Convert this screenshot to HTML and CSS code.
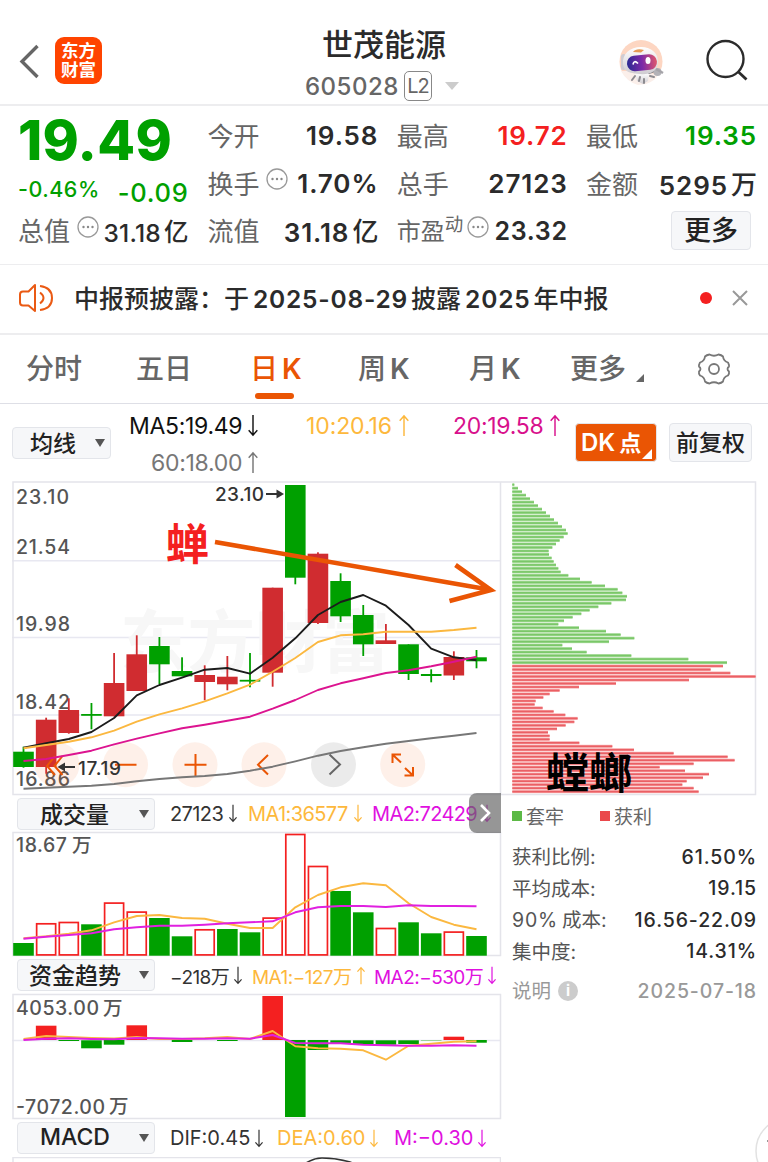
FILE: index.html
```html
<!DOCTYPE html>
<html lang="zh-CN">
<head>
    <meta charset="UTF-8">
    <meta name="viewport" content="width=device-width, initial-scale=1.0">
    <title>世茂能源 605028</title>
    <link rel="stylesheet" href="styles.css">
</head>
<body>
    <header class="header">
        <div class="header-left">
            <svg class="back" width="22" height="36" viewBox="0 0 22 36"><path d="M19.500 2 4 17.500 19.500 33" fill="none" stroke="#666" stroke-width="3.400"/></svg>
            <div class="logo"><span>东方</span><span>财富</span></div>
        </div>
        <div class="stock">
            <h1>世茂能源</h1>
            <div class="code"><span class="code-num">605028</span><span class="level">L2</span><i class="code-arrow"></i></div>
        </div>
        <div class="header-right">
            <svg class="robot" width="46" height="46" viewBox="0 0 46 46">
                <defs>
                    <linearGradient id="visor"><stop offset="0" stop-color="#2b2a92"/><stop offset=".5" stop-color="#7c2aa8"/><stop offset="1" stop-color="#e0566c"/></linearGradient>
                    <linearGradient id="shell" x2="0" y2="1"><stop offset="0" stop-color="#fff"/><stop offset="1" stop-color="#cfccd1"/></linearGradient>
                </defs>
                <circle cx="23" cy="22.500" r="21.500" fill="#fdd6c2"/>
                <path d="M3 32q6 11 17 14l8-1q9-3 12-9l-14-4z" fill="#fbefea"/>
                <path d="M17 34h14l-1 8-5 3-6-3z" fill="url(#shell)"/>
                <path d="M17 37l-3 4M21 42l1-4M26 44v-4M31 34l6-2M32 37l4 1" stroke="#8c8b90" stroke-width="2" stroke-linecap="round"/>
                <circle cx="39.500" cy="33" r="4" fill="#b3b2b7"/>
                <path d="M38 30l7 4" stroke="#a5a4a9" stroke-width="2.500"/>
                <rect x="3" y="15" width="5" height="16" rx="2.500" fill="#cfccd2"/>
                <path d="M5 25C4 15 12 8 23 8s18 7 17 16-9 12-18 11S6 34 5 25z" fill="url(#shell)"/>
                <path d="M15 13q3-4 11-2l-3 2.500z" fill="#e59a55"/>
                <rect x="9" y="16" width="30" height="15.500" rx="7.500" fill="url(#visor)" transform="rotate(-6 24 24)"/>
                <path d="M15 25.500q1-5 5-1" fill="none" stroke="#fff" stroke-width="1.700"/>
                <ellipse cx="30" cy="21.500" rx="2.500" ry="3.500" fill="#fff"/>
            </svg>
            <svg class="search" width="44" height="44" viewBox="0 0 44 44"><circle cx="20.500" cy="20" r="18" fill="none" stroke="#2b2b2b" stroke-width="2.400"/><path d="M33.500 33l8 7.500" stroke="#2b2b2b" stroke-width="2.800"/></svg>
        </div>
    </header>

    <section class="quote">
        <div class="price-box">
            <div class="price">19.49</div>
            <div class="change"><span class="pct">-0.46%</span><span class="diff">-0.09</span></div>
            <div class="cell"><span class="label">总值</span><svg class="dots" viewBox="0 0 22 22"><use href="#dots"/></svg><b class="small">31.18<em>亿</em></b></div>
        </div>
        <div class="quote-grid">
            <div class="cell"><span class="label">今开</span><b>19.58</b></div>
            <div class="cell"><span class="label">最高</span><b class="red">19.72</b></div>
            <div class="cell"><span class="label">最低</span><b class="green">19.35</b></div>
            <div class="cell"><span class="label">换手</span><svg class="dots" viewBox="0 0 22 22"><use href="#dots"/></svg><b>1.70%</b></div>
            <div class="cell"><span class="label">总手</span><b>27123</b></div>
            <div class="cell"><span class="label">金额</span><b>5295<em>万</em></b></div>
            <div class="cell"><span class="label">流值</span><b>31.18<em>亿</em></b></div>
            <div class="cell"><span class="label pe">市盈<sup>动</sup></span><svg class="dots" viewBox="0 0 22 22"><use href="#dots"/></svg><b class="pe-value">23.32</b></div>
            <div class="cell"><button class="btn more-btn">更多</button></div>
        </div>
        <svg class="defs" width="0" height="0"><symbol id="dots" viewBox="0 0 22 22"><circle cx="11" cy="11" r="10" fill="none" stroke="#999" stroke-width="1.300"/><circle cx="6.500" cy="11" r="1.200" fill="#888"/><circle cx="11" cy="11" r="1.200" fill="#888"/><circle cx="15.500" cy="11" r="1.200" fill="#888"/></symbol></svg>
    </section>

    <section class="notice">
        <svg width="36" height="30" viewBox="0 0 36 30" fill="none" stroke="#ea5a14" stroke-width="2" stroke-linejoin="round"><path d="M16 2v26l-6.500-5.500H4q-3 0-3-3v-8q0-3 3-3h5.500z"/><path d="M21 9.500q7 5.500 0 11M21 3q12 1.500 12 12T21 27"/></svg>
        <p>中报预披露：<span class="yu">于</span><span class="num">2025-08-29</span>披露<span class="num">2025</span>年中报</p>
        <i class="red-dot"></i>
        <svg width="18" height="18" viewBox="0 0 18 18"><path d="M2 2l14 14M16 2 2 16" stroke="#999" stroke-width="2"/></svg>
    </section>

    <nav class="tabs">
        <a>分时</a>
        <a>五日</a>
        <a class="active">日<span>K</span></a>
        <a>周<span>K</span></a>
        <a>月<span>K</span></a>
        <a class="tab-more">更多<i></i></a>
        <svg width="34" height="34" viewBox="0 0 34 34" fill="none" stroke="#777" stroke-width="1.800" stroke-linejoin="round"><path d="M12.500 2.500Q17 5 21.500 2.500q3 .5 4.500 2 .5 4.500 5 6 1.500 3 1 4-3 2.500 0 5 .5 2-1 4-4.500 1.500-5 6-1.500 1.500-4.500 2-4.500-2.500-9 0-3-.5-4.500-2-.5-4.500-5-6-1.500-2-1-4 3-2.500 0-5-.5-1 1-4 4.500-1.500 5-6 1.500-1.500 4.500-2z"/><circle cx="17" cy="17" r="5"/></svg>
    </nav>

    <section class="ma-bar">
        <button class="btn select ma-select">均线<i></i></button>
        <div class="ma-values">
            <span class="ma5">MA5:19.49<svg class="arr"><use href="#down"/></svg></span>
            <span class="ma10">10:20.16<svg class="arr"><use href="#up"/></svg></span>
            <span class="ma20">20:19.58<svg class="arr"><use href="#up"/></svg></span>
            <span class="ma60">60:18.00<svg class="arr"><use href="#up"/></svg></span>
        </div>
        <button class="btn dk">DK<span>点</span></button>
        <button class="btn fq">前复权</button>
        <svg class="defs" width="0" height="0">
            <symbol id="down" viewBox="0 0 12 24"><path d="M6 1v21M1.500 17 6 22l4.500-5" fill="none" stroke="currentColor" stroke-width="1.500"/></symbol>
            <symbol id="up" viewBox="0 0 12 24"><path d="M6 23V2M1.500 7 6 2l4.500 5" fill="none" stroke="currentColor" stroke-width="1.500"/></symbol>
        </svg>
    </section>

    <main class="main">
        <div class="charts">
            <svg class="chart" width="489" height="314" viewBox="12 481 489 314">
                <path class="grid" d="M12 560.700h489M12 637.500h489M12 715h489M410 644.300h91"/>
                <path class="frame" d="M13 482h487.500v312.500H13z"/>
                <text class="watermark" x="120" y="667" textLength="270">东方财富</text>
                <g class="axis">
                    <text x="16" y="503.500" textLength="53">23.10</text>
                    <text x="16" y="554" textLength="54">21.54</text>
                    <text x="16" y="631" textLength="54">19.98</text>
                    <text x="16" y="709" textLength="54">18.42</text>
                    <text x="16" y="786" textLength="54">16.86</text>
                </g>
                <g id="candles"></g>
                <g class="tools">
                    <circle cx="57" cy="764.700" r="22.500"/><circle cx="125.500" cy="764.700" r="22.500"/><circle cx="195" cy="764.700" r="22.500"/><circle cx="264" cy="764.700" r="22.500"/><circle class="off" cx="333.500" cy="764.700" r="22.500"/><circle cx="402.700" cy="764.700" r="22.500"/>
                    <path d="M55 756l-8 10 8 9M62.500 756l-8 10 8 9M115 764.700h21.500M184.500 764.700h22M195.500 754v22M268 755l-10 9.700 10 9.800"/>
                    <path d="M392.500 763v-8.500h8.500M392.500 754.500l8.500 8M405 768l8 7.500M413 767v8.500h-8.500"/>
                    <path class="off-arrow" d="M329.500 754.500l10.500 10-10.500 10"/>
                </g>
                <g id="ma-lines"></g>
                <text class="mark" x="215" y="501" textLength="49">23.10</text>
                <path class="mark-arrow" d="M266 494h12"/><path d="M276.500 489.500 284 494l-7.500 4.500z" fill="#333"/>
                <text class="mark" x="78" y="774.500" textLength="43">17.19</text>
                <path class="mark-arrow" d="M75 767H63"/><path d="M65 762.500 57.500 767l7.500 4.500z" fill="#333"/>
                <text class="cicada" x="166" y="559.500">蝉</text>
            </svg>

            <div class="indicator first">
                <button class="btn select">成交量<i></i></button>
                <span class="v0">27123<svg class="arr"><use href="#down"/></svg></span>
                <span class="v1">MA1:36577<svg class="arr"><use href="#down"/></svg></span>
                <span class="v2">MA2:72429<svg class="arr"><use href="#down"/></svg></span>
                <div class="handle"><svg width="14" height="22" viewBox="0 0 14 22"><path d="M3 3l8 8-8 8" fill="none" stroke="#fff" stroke-width="2.600"/></svg></div>
            </div>
            <svg class="chart" width="489" height="124" viewBox="12 832 489 124">
                <path class="frame" d="M13 832.500h487.500v123H13z"/>
                <text class="axis" x="16" y="852" textLength="51">18.67</text><text class="axis" x="72" y="852">万</text>
                <g id="volume"></g>
            </svg>

            <div class="indicator second">
                <button class="btn select">资金趋势<i></i></button>
                <span class="v0">−218万<svg class="arr"><use href="#down"/></svg></span>
                <span class="v1">MA1:−127万<svg class="arr"><use href="#up"/></svg></span>
                <span class="v2">MA2:−530万<svg class="arr"><use href="#down"/></svg></span>
            </div>
            <svg class="chart" width="489" height="125" viewBox="12 994 489 125">
                <path class="grid" d="M12 1040.500h489"/>
                <path class="frame" d="M13 994.500h487.500v124H13z"/>
                <text class="axis" x="16" y="1015" textLength="83">4053.00</text><text class="axis" x="103" y="1014.500">万</text>
                <text class="axis" x="16" y="1113.500" textLength="89">-7072.00</text><text class="axis" x="109" y="1113">万</text>
                <g id="fund"></g>
            </svg>

            <div class="indicator third">
                <button class="btn select">MACD<i></i></button>
                <span class="v0">DIF:0.45<svg class="arr"><use href="#down"/></svg></span>
                <span class="v1">DEA:0.60<svg class="arr"><use href="#down"/></svg></span>
                <span class="v2">M:−0.30<svg class="arr"><use href="#down"/></svg></span>
            </div>
            <svg class="chart cut" width="489" height="5" viewBox="12 1157 489 5">
                <path class="frame" d="M13 1170v-12.500h487.500V1170"/>
                <path d="M306 1163q8-5 16-5 14 0 28 4l5 2" fill="none" stroke="#333" stroke-width="1.600"/>
            </svg>
        </div>

        <aside class="chips">
            <svg class="chart" width="256" height="314" viewBox="501 481 256 314">
                <path class="frame" d="M501 482h254.500v312.500H501"/>
                <g id="chips"></g>
                <text class="mantis" x="546" y="789" textLength="86">螳螂</text>
            </svg>
            <div class="legend"><span><i class="bg-green"></i>套牢</span><span><i class="bg-red"></i>获利</span></div>
            <dl>
                <div><dt>获利比例:</dt><dd>61.50%</dd></div>
                <div><dt>平均成本:</dt><dd>19.15</dd></div>
                <div><dt><span>90%</span>成本:</dt><dd>16.56-22.09</dd></div>
                <div><dt>集中度:</dt><dd>14.31%</dd></div>
                <div class="explain"><dt>说明<i>i</i></dt><dd>2025-07-18</dd></div>
            </dl>
        </aside>

        <svg class="pointer" width="284" height="48" viewBox="213 560 284 48"><path d="M215 542l275 47.800M455.500 565l35.500 25-41.500 11"/></svg>
    </main>
    <svg class="float-btn" width="13" height="46" viewBox="755 1116 13 46"><circle cx="789" cy="1151" r="33" fill="#fff" stroke="#e2e2e2" stroke-width="1.500"/><path d="M767 1141h1" stroke="#999" stroke-width="2"/></svg>

    <script src="script.js"></script>
</body>
</html>
```
FILE: styles.css
```css
* {
    box-sizing: border-box;
}

body {
    margin: 0;
    width: 768px;
    height: 1162px;
    overflow: hidden;
    position: relative;
    background: #fff;
    color: #2b2b2b;
    font-family: Inter, "Noto Sans CJK SC", sans-serif;
}

i, em {
    font-style: normal;
}

.defs {
    position: absolute;
}

.green {
    color: #00a000;
}

.red {
    color: #f42020;
}

/* header */
.header {
    height: 106px;
    display: grid;
    grid-template-columns: 250px 1fr 250px;
    border-bottom: 2px solid #ededef;
}

.header-left {
    display: flex;
    align-items: flex-start;
    padding: 37px 0 0 18px;
    gap: 15px;
}

.back {
    margin-top: 7px;
}

.logo {
    width: 47px;
    height: 47px;
    border-radius: 9px;
    background: #ff4400;
    color: #fff;
    font-size: 17.5px;
    font-weight: 700;
    line-height: 19px;
    padding-top: 4px;
    text-align: center;
}

.logo span {
    display: block;
}

.stock h1 {
    margin: 24px 0 0;
    font-size: 31px;
    line-height: 42px;
    font-weight: 500;
    text-align: center;
}

.code {
    display: flex;
    align-items: center;
    height: 40px;
    padding-left: 55px;
    color: #666;
}

.code-num {
    font-size: 24px;
    font-weight: 500;
    letter-spacing: 0.5px;
    width: 99px;
}

.level {
    width: 28px;
    height: 30px;
    border: 1.5px solid #888;
    border-radius: 5px;
    font-size: 20px;
    line-height: 28px;
    text-align: center;
    letter-spacing: -1px;
}

.code-arrow {
    margin-left: 13px;
    border: 7px solid transparent;
    border-top: 8px solid #ccc;
    border-bottom: 0;
}

.header-right {
    display: flex;
    align-items: flex-start;
    padding: 39px 0 0 100px;
    gap: 41px;
}

/* quote */
.quote {
    height: 159px;
    display: flex;
    padding: 6px 12px 0 18px;
    border-bottom: 1.5px solid #ededef;
}

.price-box {
    width: 170px;
    margin-right: 20px;
    color: #00a000;
}

.price {
    font-size: 55px;
    font-weight: 800;
    line-height: 57px;
    height: 58px;
    letter-spacing: 0.3px;
}

.change {
    display: flex;
    justify-content: space-between;
    height: 37px;
    line-height: 38px;
    font-weight: 500;
}

.pct {
    font-size: 21.5px;
    letter-spacing: 0.5px;
}

.diff {
    font-size: 25.5px;
    letter-spacing: 0.7px;
    padding-top: 4px;
    margin-right: -1px;
}

.quote-grid {
    display: grid;
    grid-template-columns: 170px 170px 170px;
    grid-template-rows: 47.5px 47.5px 47.5px;
    column-gap: 19.3px;
}

.cell {
    display: flex;
    align-items: center;
    height: 47.5px;
    color: #2b2b2b;
}

.label {
    font-size: 26px;
    color: #666;
    padding-bottom: 2px;
}

.cell b {
    margin-left: auto;
    margin-right: -1px;
    font-size: 26px;
    font-weight: 600;
    letter-spacing: 0.9px;
}

.cell b em {
    font-weight: 500;
    margin-left: 3px;
    letter-spacing: 0;
    position: relative;
    top: -1px;
}

.cell b.small {
    font-size: 24.5px;
    padding-top: 2px;
    font-weight: 500;
    letter-spacing: 0.2px;
}

.dots {
    width: 22px;
    height: 22px;
    flex: none;
    margin: -8px 0 0 7px;
}

.pe {
    font-size: 24px;
    width: 70px;
    white-space: nowrap;
}

.pe sup {
    font-size: 18.5px;
    line-height: 0;
    vertical-align: 9px;
}

.cell .pe + .dots {
    margin-left: 0;
}

.cell b.pe-value {
    font-size: 25px;
    letter-spacing: 0.7px;
}

.btn {
    border: 1.5px solid #e3e5ea;
    border-radius: 4px;
    background: #f6f7f9;
    color: #222;
    font-family: inherit;
    font-weight: 500;
    padding: 0;
}

.more-btn {
    width: 80px;
    height: 39px;
    margin: 0 5px 0 auto;
    font-size: 27px;
    line-height: 34px;
}

/* notice */
.notice {
    height: 70px;
    display: flex;
    align-items: center;
    padding: 0 19px 2px 19px;
    border-bottom: 2px solid #ededef;
}

.notice p {
    margin: -2px auto 0 19px;
    font-size: 25px;
    font-weight: 500;
    white-space: nowrap;
}

.notice .num {
    font-weight: 600;
    margin: 0 3px 0 4px;
    font-size: 24.5px;
    letter-spacing: 0.8px;
}

.red-dot {
    width: 12px;
    height: 12px;
    border-radius: 50%;
    background: #f42020;
    margin-right: 19px;
}

/* tabs */
.tabs {
    height: 69px;
    display: flex;
    align-items: center;
    padding-left: 26px;
    border-bottom: 1.5px solid #dedfe6;
    font-size: 28px;
    font-weight: 500;
    color: #666;
}

.tabs a {
    position: relative;
    width: 110px;
    white-space: nowrap;
    line-height: 69px;
}

.tabs a:nth-child(3) {
    padding-left: 4px;
}

.tabs a:nth-child(4) {
    padding-left: 2px;
}

.tabs a:nth-child(5) {
    padding-left: 3px;
    width: 104px;
}

.tabs a span {
    margin-left: 4px;
    font-weight: 600;
}

.tabs .active {
    color: #ea5504;
}

.tabs .active::after {
    content: "";
    position: absolute;
    left: 9px;
    bottom: 5px;
    width: 39px;
    height: 6px;
    border-radius: 3px;
    background: #ea5504;
}

.tabs .tab-more {
    width: 127px;
}

.tab-more i {
    display: inline-block;
    margin-left: 10px;
    margin-bottom: -3px;
    border: 4px solid #666;
    border-left-color: transparent;
    border-top-color: transparent;
}

/* moving averages */
.ma-bar {
    height: 77px;
    display: flex;
    padding: 0 15px 0 12px;
}

.select {
    width: 138px;
    height: 32px;
    flex: none;
    display: flex;
    align-items: center;
    justify-content: space-between;
    padding: 0 5px 2px 0;
    font-size: 23px;
}

.select i {
    border: 5px solid transparent;
    border-top: 8px solid #555;
    border-bottom: 0;
    margin-top: 2px;
}

.ma-bar .ma-select {
    width: 99px;
    margin-top: 23px;
    padding-left: 17px;
}

.arr {
    width: 12px;
    height: 23px;
    margin-left: 6px;
    flex: none;
}

.ma-values {
    width: 464px;
    display: grid;
    grid-template-columns: 195px 147px 1fr;
    grid-template-rows: 37px 37px;
    padding: 3px 0 0 18px;
    font-size: 23px;
    font-weight: 400;
}

.ma-values span {
    display: flex;
    align-items: center;
    white-space: nowrap;
    letter-spacing: -0.1px;
}

.ma-values .ma5 {
    color: #111;
    letter-spacing: -0.3px;
}

.ma5 .arr, .ma60 .arr {
    margin-left: 5px;
}

.ma-values .ma10 {
    color: #fdb83c;
    margin-left: -18px;
}

.ma-values .ma20 {
    color: #d8108c;
    margin-left: -18px;
    letter-spacing: -0.3px;
}

.ma-values .ma60 {
    color: #777;
    padding-left: 22px;
    letter-spacing: -0.3px;
}

.btn.dk {
    width: 82px;
    height: 39px;
    margin: 19px 12px 0 0;
    background: #ea5504;
    color: #fff;
    font-size: 24px;
    font-weight: 600;
    position: relative;
    text-align: left;
    padding-left: 5px;
    line-height: 34px;
}

.dk span {
    margin-left: 4px;
    font-size: 22px;
}

.dk::after {
    content: "";
    position: absolute;
    right: 4px;
    bottom: 2px;
    border: 5.5px solid #fff;
    border-left-color: transparent;
    border-top-color: transparent;
}

.fq {
    width: 83px;
    height: 39px;
    margin-top: 19px;
    font-size: 23px;
    line-height: 34px;
}

.ma-bar .dk, .ma-bar .fq {
    flex: none;
}

/* charts */
.main {
    display: flex;
    position: relative;
    padding-left: 12px;
}

.charts {
    width: 489px;
}

.chart {
    display: block;
    overflow: visible;
}

.chart.cut {
    overflow: hidden;
}

.frame {
    fill: none;
    stroke: #e4e4ea;
    stroke-width: 1.5;
}

.grid {
    fill: none;
    stroke: #e8e8f1;
    stroke-width: 1.5;
}

.watermark {
    font-size: 68px;
    font-weight: 700;
    fill: #f7f7f7;
}

.axis {
    font-size: 19.5px;
    font-weight: 500;
    fill: #555;
}

.mark {
    font-size: 19px;
    font-weight: 500;
    fill: #333;
}

.mark-arrow {
    stroke: #333;
    stroke-width: 2;
}

.cicada {
    font-size: 43px;
    font-weight: 700;
    fill: #f42020;
}

.mantis {
    font-size: 43px;
    font-weight: 700;
    fill: #000;
}

.tools circle {
    fill: #fa6a28;
    fill-opacity: 0.1;
}

.tools circle.off {
    fill: #000;
    fill-opacity: 0.08;
}

.tools path {
    fill: none;
    stroke: #ea5504;
    stroke-width: 2;
}

.tools path.off-arrow {
    stroke: #666;
}

.pointer {
    position: absolute;
    left: 213px;
    top: 79px;
    overflow: visible;
    fill: none;
    stroke: #ea5504;
    stroke-width: 4.6;
}

.indicator {
    position: relative;
    height: 37px;
    display: flex;
    align-items: center;
    padding-left: 5px;
    font-size: 20px;
    white-space: nowrap;
}

.indicator .select {
    margin-right: 15px;
    padding-left: 22px;
}

.indicator .arr {
    width: 10px;
    height: 19px;
    margin-left: 4px;
}

.indicator span {
    display: flex;
    align-items: center;
    flex: none;
}

.v0 {
    width: 78px;
    color: #333;
}

.v1 {
    width: 124px;
    color: #fdb83c;
}

.v2 {
    color: #e010e0;
}

.first span {
    letter-spacing: -0.6px;
}

.first .arr {
    margin-left: 5px;
}

.second, .third {
    height: 38px;
}

.second .select {
    padding-left: 11px;
}

.second span {
    font-size: 19px;
    letter-spacing: -0.55px;
}

.second .v0 {
    width: 82px;
}

.second .v1 {
    width: 122px;
}

.third .v0 {
    width: 107px;
}

.third .v1 {
    width: 117px;
}

.handle {
    position: absolute;
    right: 0;
    top: -2px;
    width: 32px;
    height: 40px;
    display: flex;
    align-items: center;
    justify-content: center;
    border-radius: 8px 0 0 8px;
    background: rgba(100, 100, 100, 0.68);
}

/* chip distribution */
.legend {
    display: flex;
    height: 42px;
    align-items: center;
    padding: 0 0 2px 11px;
    font-size: 19px;
    color: #666;
}

.legend span {
    display: flex;
    align-items: center;
    width: 88px;
}

.legend i {
    width: 10px;
    height: 10px;
    margin: 1px 4px 0 0;
}

.bg-green {
    background: #5cb946;
}

.bg-red {
    background: #ea484b;
}

.chips dl {
    margin: 4px 0 0;
    padding-left: 11px;
}

.chips dl div {
    display: flex;
    height: 31.5px;
    align-items: center;
    justify-content: space-between;
    font-size: 19.5px;
}

.chips dt {
    color: #555;
    padding-bottom: 2px;
}

.chips dt span {
    margin-right: 4px;
    letter-spacing: 0.8px;
}

.chips dd {
    margin: 0;
    font-weight: 500;
    letter-spacing: 0.9px;
}

.chips dl .explain {
    margin-top: 8px;
}

.chips .explain dt, .chips .explain dd {
    color: #999;
}

.explain i {
    display: inline-block;
    width: 20px;
    height: 20px;
    margin-left: 7px;
    border-radius: 50%;
    background: #ccc;
    color: #fff;
    font-size: 15px;
    line-height: 20px;
    text-align: center;
    font-weight: 700;
    vertical-align: 2px;
}

.float-btn {
    position: absolute;
    right: 0;
    bottom: 0;
    overflow: hidden;
}
```
FILE: script.js
```js
const SVG = 'http://www.w3.org/2000/svg';
const RED = '#d02c30';
const BRIGHT = '#f42020';
const GREEN = '#00a000';

const centerX = i => 23.5 + i * 22.65;

function add(id, tag, attrs) {
    const el = document.createElementNS(SVG, tag);
    for (const key in attrs) el.setAttribute(key, attrs[key]);
    document.getElementById(id).appendChild(el);
}

function bar(id, i, top, bottom, color) {
    add(id, 'rect', { x: centerX(i) - 10.3, y: top, width: 20.6, height: bottom - top, fill: color });
}

function line(id, values, color) {
    const points = values.map((y, i) => centerX(i) + ',' + y).join(' ');
    add(id, 'polyline', { points, fill: 'none', stroke: color, 'stroke-width': 1.9, 'stroke-linejoin': 'round' });
}

// [color, high, body top, body bottom, low]
const candles = [
    ['g', 746.7, 751.7, 767, 767.7], ['r', 717.7, 719.7, 767, 773.7], ['r', 698.3, 710, 733, 733.7],
    ['g', 703, 714, 715.8, 729.3], ['r', 653, 683, 716.3, 716.3], ['r', 635.3, 654.3, 691, 691],
    ['g', 637, 646, 664.3, 684.3], ['g', 657.3, 671, 676.3, 676.3], ['r', 665.3, 675, 682, 700.3],
    ['r', 656, 676.7, 684.3, 690.3], ['g', 653, 679.8, 681.6, 687.3], ['r', 587.7, 587.7, 672.7, 686.7],
    ['g', 485, 485, 577.7, 584.3], ['r', 552.3, 553.7, 623, 624], ['g', 573.3, 581, 616.3, 622],
    ['g', 605, 615, 644.3, 656], ['r', 624, 640.3, 644, 644], ['g', 644.3, 644.3, 674, 680],
    ['g', 669.3, 674, 676, 682.3], ['r', 651.3, 657, 675.5, 680], ['g', 650, 657.3, 661.3, 668.3]
];
candles.forEach(([c, high, top, bottom, low], i) => {
    const color = c === 'g' ? GREEN : RED;
    add('candles', 'rect', { x: centerX(i) - 0.9, y: high, width: 1.8, height: low - high, fill: color });
    bar('candles', i, top, bottom, color);
});

line('ma-lines', [788.7, 787.7, 786.7, 785.7, 784, 781.3, 779, 777.3, 776, 774, 770.7, 766.7, 761.3, 755.7, 751, 747.3, 743.7, 741, 738.3, 735.7, 733], '#777');
line('ma-lines', [747.7, 743.3, 739, 732, 718, 695.3, 685, 677.7, 669.7, 668, 673.7, 657.7, 638.3, 615, 602, 595, 605.7, 625, 648.7, 657.3, 660.3], '#1c1c1c');
line('ma-lines', [748.3, 745, 741.7, 737.3, 730.7, 721.7, 714.3, 708.3, 701.3, 693.3, 684.7, 671.7, 658, 642, 635.3, 634.3, 631.7, 631.7, 631.7, 630, 627.7], '#fbb840');
line('ma-lines', [761, 759, 755, 750.7, 744.3, 738.7, 733.3, 728.3, 724.7, 720.7, 716.7, 708.7, 700, 690, 683.3, 678.3, 673, 670.3, 666.3, 661.7, 656.7], '#dc1490');

// volume bars, hollow when the day closed up
const volume = [
    ['g', 943], ['r', 923], ['r', 921.7], ['g', 924.3], ['r', 902.3], ['r', 911.3], ['g', 918],
    ['g', 936.3], ['r', 929], ['g', 929], ['g', 932.3], ['r', 917.3], ['r', 833.7], ['r', 865.7],
    ['g', 891], ['g', 912.3], ['r', 927.7], ['g', 922.3], ['g', 933.3], ['r', 931.3], ['g', 936]
];
volume.forEach(([c, top], i) => {
    if (c === 'g') {
        bar('volume', i, top, 955.7, GREEN);
    } else {
        add('volume', 'rect', { x: centerX(i) - 9.5, y: top + 0.8, width: 19, height: 954.9 - top - 0.8, fill: '#fff', stroke: BRIGHT, 'stroke-width': 1.7 });
    }
});
line('volume', [938.3, 936.3, 933.7, 930.3, 922.3, 916, 915, 918, 918.7, 923.7, 928, 928, 907.3, 895, 887.3, 883.3, 885.3, 903.3, 917, 924.7, 929.3], '#fbb840');
line('volume', [938.7, 936.7, 935, 933.3, 929.3, 927.3, 925.7, 925.7, 924.7, 923.3, 922.3, 921.3, 912.3, 907.3, 906, 906, 907, 905.3, 906, 906, 906.3], '#e020e0');

// money flow, [index, top, bottom, color]
const fund = [
    [1, 1025.7, 1040, BRIGHT], [2, 1040, 1041, GREEN], [3, 1040.3, 1048.3, GREEN], [4, 1040, 1044.7, GREEN],
    [5, 1025.3, 1040, BRIGHT], [7, 1040, 1042, GREEN], [9, 1040, 1041, GREEN], [11, 996, 1040, BRIGHT],
    [12, 1040, 1117, GREEN], [13, 1040, 1050, GREEN], [14, 1040.3, 1043, GREEN], [15, 1040.3, 1044.7, GREEN],
    [16, 1040.3, 1044.7, GREEN], [17, 1040.3, 1044, GREEN], [18, 1040, 1041, '#9ad49a'], [19, 1036.7, 1040, BRIGHT], [20, 1040, 1042.7, GREEN]
];
fund.forEach(([i, top, bottom, color]) => bar('fund', i, top, bottom, color));
line('fund', [1039, 1036, 1037, 1038, 1038.5, 1037, 1039, 1039, 1038.3, 1037, 1039, 1031, 1046.3, 1048.3, 1048.7, 1050.3, 1059.7, 1045.7, 1043.7, 1041.7, 1041.3], '#fbb840');
line('fund', [1040, 1038.7, 1038.3, 1039, 1039.3, 1038, 1038.3, 1038.7, 1038.7, 1038.3, 1038.7, 1035, 1043, 1043.3, 1043.3, 1044.7, 1045.3, 1045.7, 1045.7, 1045.3, 1045.7], '#e020e0');

// chip distribution by price, widths in px
const trapped = [
    2, 5.7, 9.7, 13.7, 17.7, 21.7, 25.7, 29.7, 33.7, 37.7, 41.7, 45.7, 49.7, 53.7, 55.3, 51.3, 47.3, 43.7, 40, 36.3,
    36.7, 39.3, 41.3, 43.7, 46, 48.3, 56, 67.7, 79.3, 92.7, 105.3, 110, 114.7, 113.7, 99, 86, 77.3, 69, 60.3, 51.7,
    46, 66.7, 93.7, 108.3, 122, 96.7, 50, 59.7, 74.3, 119, 176, 214.7
];
const profit = [
    210.7, 198.3, 218, 243.3, 176.7, 103.7, 66.7, 47.3, 37.3, 31, 23.3, 22.3, 30.3, 41.3, 53, 65.3, 62, 53.3, 44.7, 35.7,
    37.3, 37.3, 67, 100, 121.7, 161.3, 215.3, 222.3, 181.3, 147.3, 172.7, 196.7, 190.7, 174.3, 170, 181.3, 186.3
];
trapped.concat(profit).forEach((width, i) => {
    const y = 484.7 + i * 3.488;
    const up = i < trapped.length;
    add('chips', 'rect', { x: 512.3, y: y - 1.5, width, height: 3, fill: up ? '#a8dc9b' : '#f7a3a5' });
    add('chips', 'rect', { x: 512.3, y: y - 0.8, width, height: 1.6, fill: up ? '#7ac768' : '#ea5f64' });
});
```
